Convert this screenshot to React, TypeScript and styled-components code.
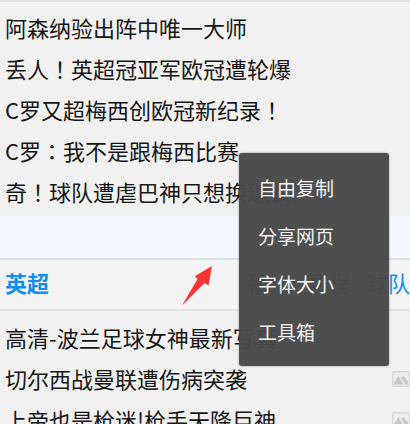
import React from "react";
import styled, { createGlobalStyle } from "styled-components";

const GlobalStyle = createGlobalStyle`
  *, *::before, *::after { box-sizing: border-box; }
  body {
    margin: 0;
    background: #f1f1f2;
    font-family: "Noto Sans CJK SC", sans-serif;
    color: #161616;
  }
`;

const Page = styled.main`
  position: relative;
  height: 100vh;
  overflow: hidden;
  background: #f1f1f2;
  border-top: 2px solid #e2e2e2;
`;

const List = styled.ul<{ $last?: boolean }>`
  list-style: none;
  margin: 0;
  padding: ${(p) => (p.$last ? "5px 0 0" : "4px 0 5px")};
`;

const Row = styled.li`
  display: flex;
  align-items: center;
  justify-content: space-between;
  height: 41px;
  padding-left: 5px;
`;

const Headline = styled.a`
  color: inherit;
  font-size: 22px;
  line-height: 40px;
  white-space: nowrap;
  text-decoration: none;
`;

/* Full-width marks sit in the middle of their cell. */
const Mark = styled.span`
  font-family: "Noto Sans CJK TC", sans-serif;
`;

const Band = styled.div`
  height: 42px;
  background: #f3f8fe;
`;

const SectionHeader = styled.header`
  display: flex;
  align-items: center;
  justify-content: space-between;
  height: 53px;
  padding: 0 0 6px 5px;
  background: #f4f4f5;
  border-top: 2px solid #dde1e7;
  border-bottom: 2px solid #e2e3e6;
  color: #118eee;
`;

const SectionTitle = styled.h2`
  margin: 0;
  font-size: 22px;
  font-weight: 700;
  line-height: 40px;
`;

const Links = styled.nav`
  display: flex;
  gap: 16px;
`;

const SectionLink = styled.a`
  color: inherit;
  font-size: 22px;
  line-height: 40px;
  white-space: nowrap;
  text-decoration: none;
`;

const Menu = styled.div`
  position: absolute;
  top: 151px;
  right: 21px;
  width: 150px;
  padding: 11px 0 10px;
  border-radius: 3px;
  background: rgba(72, 72, 72, 0.97);
  box-shadow: 0 0 2px rgba(0, 0, 0, 0.5);
`;

const MenuItem = styled.button`
  display: block;
  width: 100%;
  height: 48px;
  padding: 0 19px;
  border: 0;
  background: none;
  color: #f2f2f2;
  font: inherit;
  font-size: 19px;
  line-height: 48px;
  text-align: left;
`;

const Arrow = styled.svg`
  position: absolute;
  top: 263px;
  left: 181px;
  width: 32px;
  height: 44px;
`;

const Thumb = styled.svg`
  flex: none;
  width: 18px;
  height: 18px;
  padding-top: 2px;
`;

const PictureIcon = () => (
  <Thumb viewBox="0 0 18 16" role="img" aria-label="图片">
    <rect x="0.75" y="0.75" width="17" height="14.5" rx="1.5" fill="#ededed" stroke="#d8d8d8" strokeWidth="1.5" />
    <path d="M2 13.5V12L6.5 5 11.5 13.5Z" fill="#c9c9c9" />
    <path d="M9 6.5 11.5 5 16 10.5V13.5H13.5Z" fill="#c9c9c9" />
  </Thumb>
);

const withMarks = (title: string) =>
  title.split(/([！：])/).map((part, i) =>
    i % 2 ? (
      <Mark key={i} lang="zh-TW">
        {part}
      </Mark>
    ) : (
      part
    )
  );

const topNews = [
  "阿森纳验出阵中唯一大师",
  "丢人！英超冠亚军欧冠遭轮爆",
  "C罗又超梅西创欧冠新纪录！",
  "C罗：我不是跟梅西比赛",
  "奇！球队遭虐巴神只想换球衣",
];

const leagueNews = [
  { title: "高清-波兰足球女神最新写真", picture: false },
  { title: "切尔西战曼联遭伤病突袭", picture: true },
  { title: "上帝也是枪迷!枪手天降巨神", picture: true },
];

const actions = ["自由复制", "分享网页", "字体大小", "工具箱"];

export default function App() {
  return (
    <>
      <GlobalStyle />
      <Page lang="zh-CN">
        <List>
          {topNews.map((title) => (
            <Row key={title}>
              <Headline href="#">{withMarks(title)}</Headline>
            </Row>
          ))}
        </List>
        <Band />
        <SectionHeader>
          <SectionTitle>英超</SectionTitle>
          <Links>
            <SectionLink href="#">积分</SectionLink>
            <SectionLink href="#">赛程</SectionLink>
            <SectionLink href="#">球队</SectionLink>
          </Links>
        </SectionHeader>
        <List $last>
          {leagueNews.map(({ title, picture }) => (
            <Row key={title}>
              <Headline href="#">{withMarks(title)}</Headline>
              {picture && <PictureIcon />}
            </Row>
          ))}
        </List>
        <Arrow viewBox="0 0 32 44" aria-hidden="true">
          <path d="M31 1 14 11 16.5 14 1 40.5 23.5 18 27.5 20.5Z" fill="#fb3434" />
        </Arrow>
        <Menu>
          {actions.map((label) => (
            <MenuItem key={label} type="button">
              {label}
            </MenuItem>
          ))}
        </Menu>
      </Page>
    </>
  );
}
